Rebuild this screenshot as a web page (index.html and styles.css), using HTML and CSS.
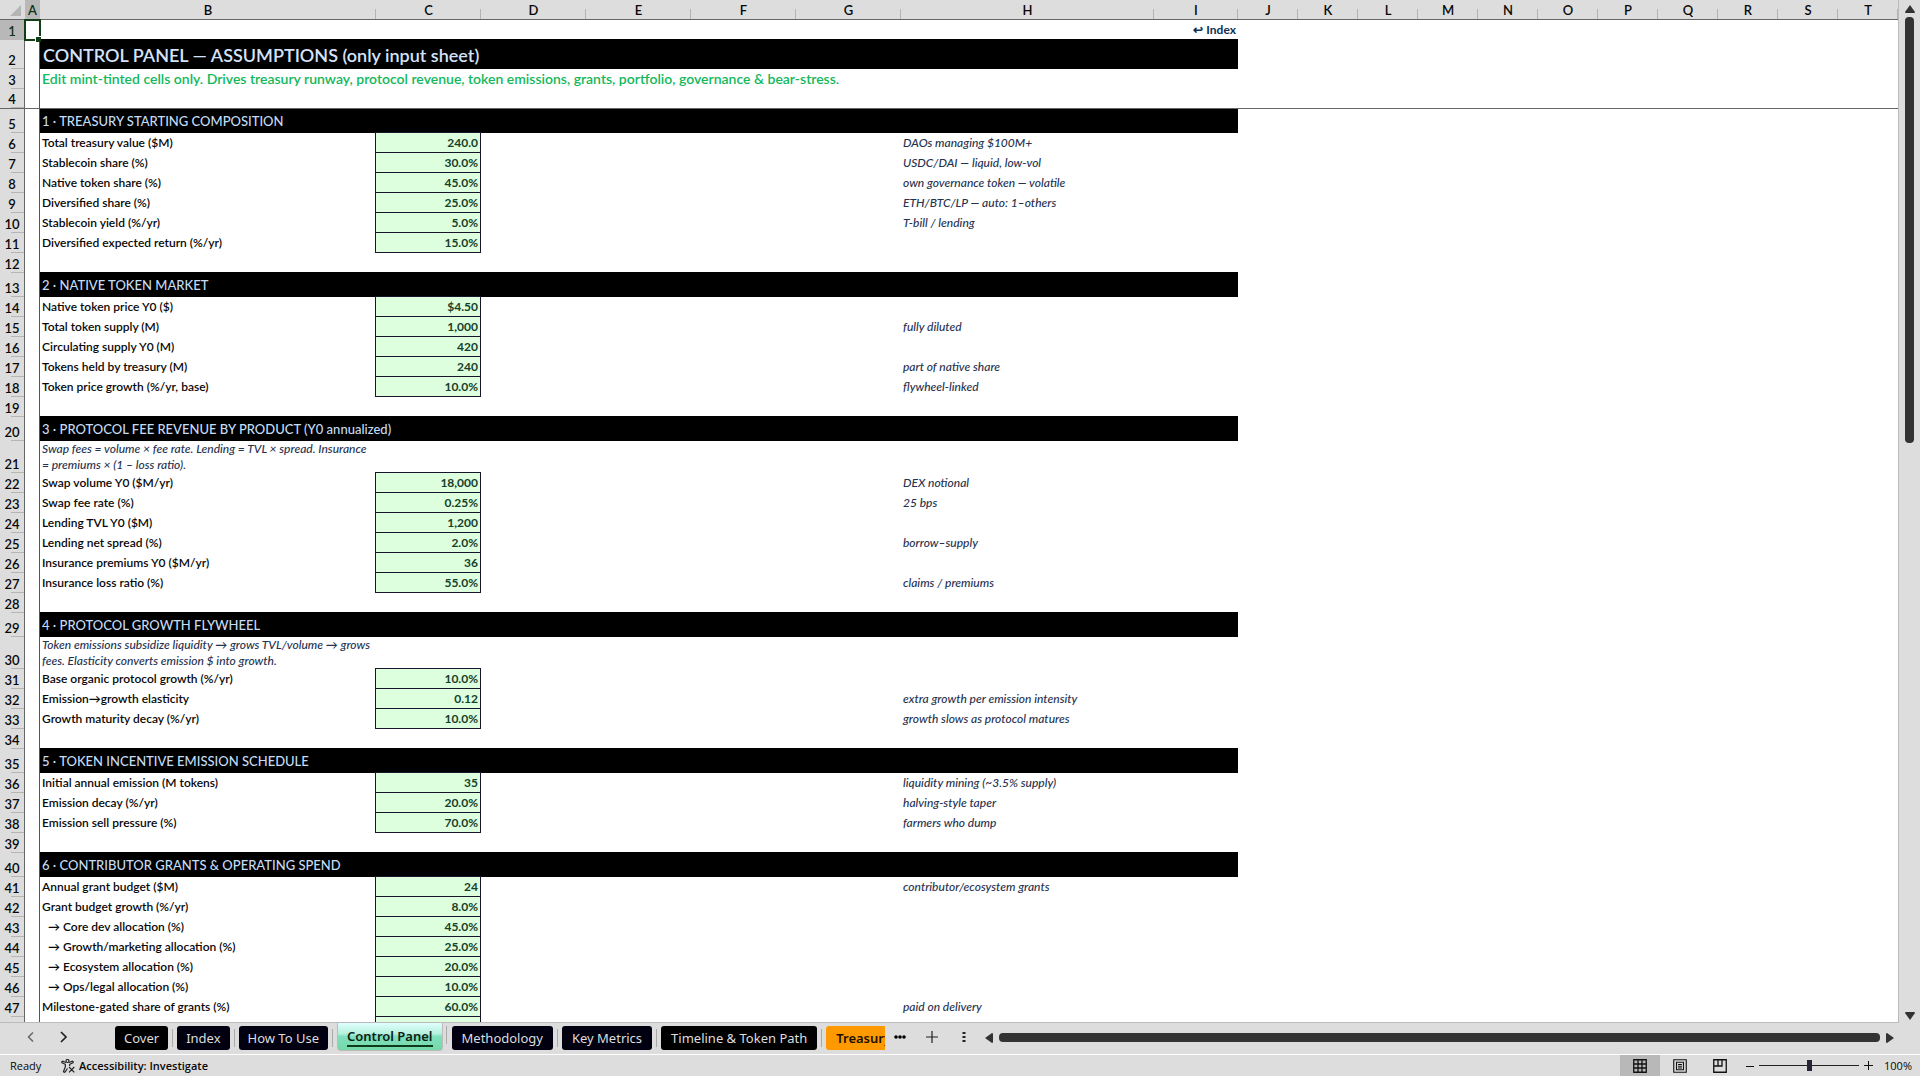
FILE: index.html
```html
<!DOCTYPE html>
<html lang="en">
<head>
<meta charset="utf-8">
<title>Control Panel</title>
<link rel="stylesheet" href="styles.css">
</head>
<body>
<main class="workspace">
<div class="sheet">
<table class="grid">
<colgroup>
<col class="w-rownum"><col class="w-a"><col class="w-b"><col class="w-c"><col class="w-c"><col class="w-c"><col class="w-c"><col class="w-c"><col class="w-h"><col class="w-i"><col span="11">
</colgroup>
<thead>
<tr><th class="corner"><svg width="11" height="11" viewBox="0 0 11 11"><path d="M11 0V11H0Z" fill="#b5b5b5"/></svg></th><th class="selected">A</th><th>B</th><th>C</th><th>D</th><th>E</th><th>F</th><th>G</th><th>H</th><th>I</th><th>J</th><th>K</th><th>L</th><th>M</th><th>N</th><th>O</th><th>P</th><th>Q</th><th>R</th><th>S</th><th>T</th></tr>
</thead>
<tbody>
<tr><th class="selected">1</th><td class="a active"></td><td colspan="7"></td><td class="home"><a href="#index">↩ Index</a></td><td colspan="11"></td></tr>
<tr class="title"><th>2</th><td class="a"></td><td class="band" colspan="8">CONTROL PANEL — ASSUMPTIONS (only input sheet)</td><td colspan="11"></td></tr>
<tr class="hint"><th>3</th><td class="a"></td><td colspan="19">Edit mint-tinted cells only. Drives treasury runway, protocol revenue, token emissions, grants, portfolio, governance &amp; bear-stress.</td></tr>
<tr class="frozen"><th>4</th><td class="a"></td><td colspan="19"></td></tr>
<tr class="section"><th>5</th><td class="a"></td><td class="band" colspan="8">1 · TREASURY STARTING COMPOSITION</td><td colspan="11"></td></tr>
<tr><th>6</th><td class="a"></td><td>Total treasury value ($M)</td><td class="input">240.0</td><td colspan="4"></td><td class="note" colspan="13">DAOs managing $100M+</td></tr>
<tr><th>7</th><td class="a"></td><td>Stablecoin share (%)</td><td class="input">30.0%</td><td colspan="4"></td><td class="note" colspan="13">USDC/DAI — liquid, low-vol</td></tr>
<tr><th>8</th><td class="a"></td><td>Native token share (%)</td><td class="input">45.0%</td><td colspan="4"></td><td class="note" colspan="13">own governance token — volatile</td></tr>
<tr><th>9</th><td class="a"></td><td>Diversified share (%)</td><td class="input">25.0%</td><td colspan="4"></td><td class="note" colspan="13">ETH/BTC/LP — auto: 1–others</td></tr>
<tr><th>10</th><td class="a"></td><td>Stablecoin yield (%/yr)</td><td class="input">5.0%</td><td colspan="4"></td><td class="note" colspan="13">T-bill / lending</td></tr>
<tr><th>11</th><td class="a"></td><td>Diversified expected return (%/yr)</td><td class="input">15.0%</td><td colspan="17"></td></tr>
<tr><th>12</th><td class="a"></td><td colspan="19"></td></tr>
<tr class="section"><th>13</th><td class="a"></td><td class="band" colspan="8">2 · NATIVE TOKEN MARKET</td><td colspan="11"></td></tr>
<tr><th>14</th><td class="a"></td><td>Native token price Y0 ($)</td><td class="input">$4.50</td><td colspan="17"></td></tr>
<tr><th>15</th><td class="a"></td><td>Total token supply (M)</td><td class="input">1,000</td><td colspan="4"></td><td class="note" colspan="13">fully diluted</td></tr>
<tr><th>16</th><td class="a"></td><td>Circulating supply Y0 (M)</td><td class="input">420</td><td colspan="17"></td></tr>
<tr><th>17</th><td class="a"></td><td>Tokens held by treasury (M)</td><td class="input">240</td><td colspan="4"></td><td class="note" colspan="13">part of native share</td></tr>
<tr><th>18</th><td class="a"></td><td>Token price growth (%/yr, base)</td><td class="input">10.0%</td><td colspan="4"></td><td class="note" colspan="13">flywheel-linked</td></tr>
<tr><th>19</th><td class="a"></td><td colspan="19"></td></tr>
<tr class="section"><th>20</th><td class="a"></td><td class="band" colspan="8">3 · PROTOCOL FEE REVENUE BY PRODUCT (Y0 annualized)</td><td colspan="11"></td></tr>
<tr class="memo"><th>21</th><td class="a"></td><td class="note">Swap fees = volume × fee rate. Lending = TVL × spread. Insurance = premiums × (1 – loss ratio).</td><td colspan="18"></td></tr>
<tr><th>22</th><td class="a"></td><td>Swap volume Y0 ($M/yr)</td><td class="input">18,000</td><td colspan="4"></td><td class="note" colspan="13">DEX notional</td></tr>
<tr><th>23</th><td class="a"></td><td>Swap fee rate (%)</td><td class="input">0.25%</td><td colspan="4"></td><td class="note" colspan="13">25 bps</td></tr>
<tr><th>24</th><td class="a"></td><td>Lending TVL Y0 ($M)</td><td class="input">1,200</td><td colspan="17"></td></tr>
<tr><th>25</th><td class="a"></td><td>Lending net spread (%)</td><td class="input">2.0%</td><td colspan="4"></td><td class="note" colspan="13">borrow–supply</td></tr>
<tr><th>26</th><td class="a"></td><td>Insurance premiums Y0 ($M/yr)</td><td class="input">36</td><td colspan="17"></td></tr>
<tr><th>27</th><td class="a"></td><td>Insurance loss ratio (%)</td><td class="input">55.0%</td><td colspan="4"></td><td class="note" colspan="13">claims / premiums</td></tr>
<tr><th>28</th><td class="a"></td><td colspan="19"></td></tr>
<tr class="section"><th>29</th><td class="a"></td><td class="band" colspan="8">4 · PROTOCOL GROWTH FLYWHEEL</td><td colspan="11"></td></tr>
<tr class="memo"><th>30</th><td class="a"></td><td class="note">Token emissions subsidize liquidity → grows TVL/volume → grows fees. Elasticity converts emission $ into growth.</td><td colspan="18"></td></tr>
<tr><th>31</th><td class="a"></td><td>Base organic protocol growth (%/yr)</td><td class="input">10.0%</td><td colspan="17"></td></tr>
<tr><th>32</th><td class="a"></td><td>Emission→growth elasticity</td><td class="input">0.12</td><td colspan="4"></td><td class="note" colspan="13">extra growth per emission intensity</td></tr>
<tr><th>33</th><td class="a"></td><td>Growth maturity decay (%/yr)</td><td class="input">10.0%</td><td colspan="4"></td><td class="note" colspan="13">growth slows as protocol matures</td></tr>
<tr><th>34</th><td class="a"></td><td colspan="19"></td></tr>
<tr class="section"><th>35</th><td class="a"></td><td class="band" colspan="8">5 · TOKEN INCENTIVE EMISSION SCHEDULE</td><td colspan="11"></td></tr>
<tr><th>36</th><td class="a"></td><td>Initial annual emission (M tokens)</td><td class="input">35</td><td colspan="4"></td><td class="note" colspan="13">liquidity mining (~3.5% supply)</td></tr>
<tr><th>37</th><td class="a"></td><td>Emission decay (%/yr)</td><td class="input">20.0%</td><td colspan="4"></td><td class="note" colspan="13">halving-style taper</td></tr>
<tr><th>38</th><td class="a"></td><td>Emission sell pressure (%)</td><td class="input">70.0%</td><td colspan="4"></td><td class="note" colspan="13">farmers who dump</td></tr>
<tr><th>39</th><td class="a"></td><td colspan="19"></td></tr>
<tr class="section"><th>40</th><td class="a"></td><td class="band" colspan="8">6 · CONTRIBUTOR GRANTS &amp; OPERATING SPEND</td><td colspan="11"></td></tr>
<tr><th>41</th><td class="a"></td><td>Annual grant budget ($M)</td><td class="input">24</td><td colspan="4"></td><td class="note" colspan="13">contributor/ecosystem grants</td></tr>
<tr><th>42</th><td class="a"></td><td>Grant budget growth (%/yr)</td><td class="input">8.0%</td><td colspan="17"></td></tr>
<tr><th>43</th><td class="a"></td><td class="indent">→ Core dev allocation (%)</td><td class="input">45.0%</td><td colspan="17"></td></tr>
<tr><th>44</th><td class="a"></td><td class="indent">→ Growth/marketing allocation (%)</td><td class="input">25.0%</td><td colspan="17"></td></tr>
<tr><th>45</th><td class="a"></td><td class="indent">→ Ecosystem allocation (%)</td><td class="input">20.0%</td><td colspan="17"></td></tr>
<tr><th>46</th><td class="a"></td><td class="indent">→ Ops/legal allocation (%)</td><td class="input">10.0%</td><td colspan="17"></td></tr>
<tr><th>47</th><td class="a"></td><td>Milestone-gated share of grants (%)</td><td class="input">60.0%</td><td colspan="4"></td><td class="note" colspan="13">paid on delivery</td></tr>
<tr><th></th><td class="a"></td><td></td><td class="input"></td><td colspan="17"></td></tr>
</tbody>
</table>
</div>
<div class="vscroll">
<button class="arrow" aria-label="Scroll up"><svg width="10" height="8" viewBox="0 0 10 8"><path d="M5 0L10 7Q10 8 9 8H1Q0 8 0 7Z" fill="#333"/></svg></button>
<div class="vthumb"></div>
<button class="arrow" aria-label="Scroll down"><svg width="10" height="8" viewBox="0 0 10 8"><path d="M5 8L10 1Q10 0 9 0H1Q0 0 0 1Z" fill="#333"/></svg></button>
</div>
</main>
<nav class="tabbar">
<div class="tabnav">
<button aria-label="Previous sheets"><svg width="8" height="12" viewBox="0 0 8 12"><path d="M7 1.500L2.500 6L7 10.500" fill="none" stroke="#666" stroke-width="1.5"/></svg></button>
<button aria-label="Next sheets"><svg width="8" height="12" viewBox="0 0 8 12"><path d="M1 1L6 6L1 11" fill="none" stroke="#222" stroke-width="1.7"/></svg></button>
</div>
<div class="tabs">
<button class="tab black">Cover</button><button class="tab">Index</button><button class="tab">How To Use</button><button class="tab current"><span>Control Panel</span></button><button class="tab">Methodology</button><button class="tab">Key Metrics</button><button class="tab black">Timeline &amp; Token Path</button><button class="tab orange">Treasury</button>
</div>
<div class="tabtools">
<button aria-label="More sheets"><svg width="12" height="4" viewBox="0 0 12 4"><circle cx="2" cy="2" r="1.8"/><circle cx="6" cy="2" r="1.8"/><circle cx="10" cy="2" r="1.8"/></svg></button>
<button aria-label="New sheet"><svg width="12" height="12" viewBox="0 0 12 12"><path d="M6 0V12M0 6H12" stroke="#222" stroke-width="1.2"/></svg></button>
<button aria-label="Resize tabs"><svg width="4" height="12" viewBox="0 0 4 12"><path d="M.5 1h3v2h-3zM.5 5h3v2h-3zM.5 9h3v2h-3z" fill="#222"/></svg></button>
</div>
<div class="hscroll">
<button class="arrow" aria-label="Scroll left"><svg width="8" height="10" viewBox="0 0 8 10"><path d="M0 5L7 0Q8 0 8 1V9Q8 10 7 10Z" fill="#333"/></svg></button>
<div class="hthumb"></div>
<button class="arrow" aria-label="Scroll right"><svg width="8" height="10" viewBox="0 0 8 10"><path d="M8 5L1 0Q0 0 0 1V9Q0 10 1 10Z" fill="#333"/></svg></button>
</div>
</nav>
<footer class="status">
<span class="ready">Ready</span>
<button class="access"><svg width="14" height="14" viewBox="0 0 14 14" fill="none" stroke="#222" stroke-width="1.2"><circle cx="6.500" cy="2" r="1.500"/><path d="M5 3.500L1.500 2.200Q.3 2.600 1 3.800L4.300 5.300V8L2.500 12.500Q3 13.800 4 13L6.500 9.500M8 3.500L11.500 2.200Q12.700 2.600 12 3.800L8.700 5.300V7M8 8L13.300 13.300M13.300 8L8 13.300"/></svg><span>Accessibility: Investigate</span></button>
<div class="views">
<button class="view on" aria-label="Normal"><svg width="14" height="14" viewBox="0 0 14 14"><path d="M.75 .75H13.250V13.250H.75ZM.75 5H13.250M.75 9H13.250M5 .75V13.250M9 .75V13.250" fill="none" stroke="#111" stroke-width="1.3"/></svg></button>
<button class="view" aria-label="Page layout"><svg width="14" height="14" viewBox="0 0 14 14"><path d="M.75 .75H13.250V13.250H.75ZM3.500 3.200H10.500V10.800H3.500ZM5 5.500H9M5 7.200H9M5 9H9" fill="none" stroke="#111" stroke-width="1.1"/></svg></button>
<button class="view" aria-label="Page break preview"><svg width="14" height="14" viewBox="0 0 14 14"><path d="M.75 .75H13.250V13.250H.75ZM.75 7H9V.75M5 .75V7" fill="none" stroke="#111" stroke-width="1.3"/></svg></button>
</div>
<div class="zoom">
<button aria-label="Zoom out"><svg width="8" height="8" viewBox="0 0 8 8"><path d="M0 4.500H8" stroke="#111"/></svg></button>
<input type="range" min="0" max="200" value="100" aria-label="Zoom">
<button aria-label="Zoom in"><svg width="9" height="9" viewBox="0 0 9 9"><path d="M0 4.500H9M4.500 0V9" stroke="#111"/></svg></button>
<span class="percent">100%</span>
</div>
</footer>
</body>
</html>
```
FILE: styles.css
```css
* { box-sizing: border-box; }

body {
  margin: 0;
  height: 100vh;
  display: flex;
  flex-direction: column;
  overflow: hidden;
  background: #ddd;
  color: #080808;
  font-family: Lato, "Liberation Sans", sans-serif;
  font-size: 12px;
}

button {
  margin: 0;
  padding: 0;
  border: 0;
  background: none;
  color: inherit;
  font: inherit;
  display: flex;
  align-items: center;
  justify-content: center;
}

svg { display: block; }

/* Sheet */
.workspace {
  flex: 1;
  min-height: 0;
  display: flex;
}

.sheet {
  flex: 1;
  min-width: 0;
  overflow: hidden;
  background: #fff;
  border-right: 1px solid #bbb;
  border-bottom: 1px solid #bbb;
}

.grid {
  width: 100%;
  table-layout: fixed;
  border-collapse: separate;
  border-spacing: 0;
}

.w-rownum { width: 25px; }
.w-a { width: 15px; }
.w-b { width: 336px; }
.w-c { width: 105px; }
.w-h { width: 253px; }
.w-i { width: 84px; }

.grid tr { height: 20px; }
.grid tr.title { height: 29px; }
.grid tr.section { height: 24px; }
.grid tr.memo { height: 32px; }

.grid td {
  padding: 0 2px;
  line-height: 16px;
  font-weight: 600;
  white-space: nowrap;
}

.grid th {
  padding: 0 0 1px;
  background: #ddd;
  font-size: 13px;
  font-weight: 600;
  line-height: 16px;
  vertical-align: bottom;
}

.grid thead th {
  border-bottom: 1px solid #666;
  background: linear-gradient(#b5b5b5, #b5b5b5) right bottom / 1px 10px no-repeat #ddd;
}

.grid thead th.corner {
  padding: 0 0 3px 10px;
  background: #ddd;
}

.grid tbody th {
  border-right: 1px solid #666;
  background: linear-gradient(#b5b5b5, #b5b5b5) right bottom / 13px 1px no-repeat #ddd;
}

.grid thead th.selected,
.grid tbody th.selected {
  background: #b8b8b8;
  color: #0f3316;
}

.grid td.a {
  padding: 0;
  border-right: 1px solid #555;
}

.active { position: relative; }

/* Selection outline with its fill handle */
.active::before {
  content: "";
  position: absolute;
  inset: -1px -2px -1px -1px;
  border: 2px solid #123d16;
}

.active::after {
  content: "";
  position: absolute;
  right: -2px;
  bottom: -2px;
  width: 5px;
  height: 5px;
  background: #123d16;
  border: solid #fff;
  border-width: 1px 0 0 1px;
}

.grid .home {
  text-align: right;
  font-weight: 700;
}

.home a {
  color: #0b2f55;
  text-decoration: none;
}

.grid .band {
  background: #000;
  color: #c5dcf5;
  font-size: 13px;
  font-weight: 500;
}

.title .band,
.section .band { box-shadow: 0 -1px #000; }

.frozen + .section .band { box-shadow: none; }

.grid .title .band {
  padding-left: 3px;
  font-size: 18px;
  font-weight: 600;
  line-height: 24px;
  color: #d5e2fa;
}

.grid .hint td {
  font-size: 14px;
  font-weight: 600;
  color: #12b85a;
}

.grid .frozen th,
.grid .frozen td { border-bottom: 1px solid #666; }

.grid .input {
  background: #dfd;
  border-right: 1px solid #15152b;
  border-bottom: 1px solid #15152b;
  box-shadow: -1px 0 #15152b, 0 -1px #15152b, -1px -1px #15152b;
  color: #16402a;
  font-weight: 700;
  text-align: right;
}

.grid .note {
  color: #26324f;
  font-style: italic;
  font-weight: 500;
}

.grid .memo .note {
  white-space: normal;
  padding-right: 0;
}

.grid .indent { padding-left: 8px; }

.vscroll {
  width: 21px;
  padding: 5px 0 3px;
  display: flex;
  flex-direction: column;
  align-items: center;
}

.vthumb {
  width: 9px;
  height: 42%;
  margin: 4px 0 auto;
  border-radius: 4px;
  background: #333;
}

/* Sheet tabs */
.tabbar {
  height: 31px;
  display: flex;
  font-family: "Noto Sans", "Open Sans", sans-serif;
  font-size: 13px;
}

.tabnav {
  flex: none;
  width: 111px;
  padding: 0 43px 4px 26px;
  display: flex;
  align-items: center;
  justify-content: space-between;
}

.tabs {
  flex: none;
  width: 774px;
  padding-left: 4px;
  display: flex;
  align-items: flex-start;
  gap: 9px;
  overflow: hidden;
}

.tab {
  flex: none;
  height: 24px;
  margin-top: 3px;
  padding: 0 9px;
  position: relative;
  border-radius: 3px;
  background: #000010;
  color: #ddd;
}

.tab.black { background: #000; }

.tab.orange {
  background: #f90;
  color: #1a1000;
  font-weight: 600;
}

/* Divider between neighbouring tabs */
.tab::after {
  content: "";
  position: absolute;
  right: -5px;
  top: 3px;
  width: 1px;
  height: 18px;
  background: #aaa;
}

.tab.current {
  height: 28px;
  margin-top: 0;
  border: 1px solid #bbb;
  border-top: 0;
  border-radius: 0 0 4px 4px;
  background: linear-gradient(#e0ffff, #b5f0dc 40%, #7fe0bd 50%, #75d8a8);
  color: #0d2016;
  font-weight: 600;
}

.tab.current ~ .tab { padding: 0 10px; }

.tab.current span {
  line-height: 18px;
  border-bottom: 2px solid #0d3a1a;
}

.tabtools {
  flex: none;
  width: 100px;
  padding: 0 0 4px 9px;
  display: flex;
  align-items: center;
  gap: 20px;
}

.tabtools button:last-child { margin-left: 4px; }

.hscroll {
  flex: 1;
  padding: 0 26px 2px 0;
  display: flex;
  align-items: center;
  gap: 6px;
}

.hthumb {
  flex: 1;
  height: 9px;
  border-radius: 4px;
  background: #333;
}

/* Status bar */
.status {
  height: 22px;
  border-top: 1px solid #fff;
  padding: 0 8px 0 10px;
  display: flex;
  align-items: center;
  font-family: "Open Sans", "Noto Sans", sans-serif;
  font-size: 11px;
  font-weight: 500;
}

.ready { width: 51px; }

.access {
  gap: 4px;
  font-weight: 600;
}

.views {
  margin-left: auto;
  align-self: stretch;
  display: flex;
}

.view { width: 40px; }
.view.on { background: #b8b8b8; }

.zoom {
  width: 172px;
  padding-left: 6px;
  display: flex;
  align-items: center;
  gap: 5px;
}

.zoom input {
  appearance: none;
  width: 100px;
  height: 11px;
  margin: 0;
  background: linear-gradient(#222, #222) center / 100% 1px no-repeat;
}

.zoom input::-webkit-slider-thumb {
  appearance: none;
  width: 5px;
  height: 11px;
  background: #2a2438;
}

.percent { margin-left: auto; }
```
